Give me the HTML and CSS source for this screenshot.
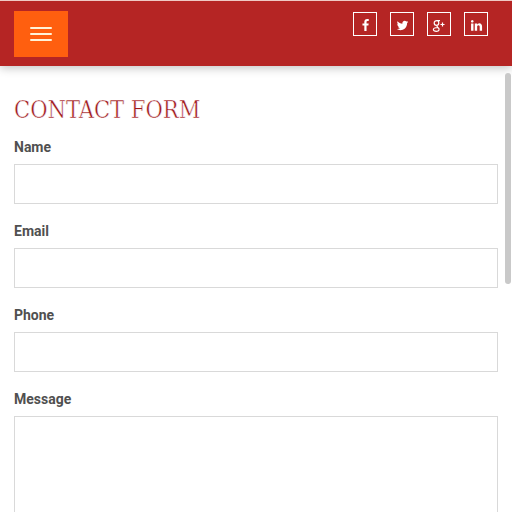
FILE: index.html
```html
<!DOCTYPE html>
<html lang="en">
<head>
<meta charset="utf-8">
<title>Contact Form</title>
<link rel="stylesheet" href="styles.css">
</head>
<body>
<header class="header">
  <button class="menu" aria-label="Menu"><span class="bar"></span><span class="bar"></span><span class="bar"></span></button>
  <nav class="social">
    <a class="social-link" aria-label="Facebook"><svg width="13" height="13" viewBox="0 0 1792 1792"><path d="M1343 12v264h-157q-86 0-116 36t-30 108v189h293l-39 296h-254v759h-306v-759h-255v-296h255v-218q0-186 104-288.5t277-102.5q147 0 228 12z"/></svg></a>
    <a class="social-link" aria-label="Twitter"><svg width="13" height="13" viewBox="0 0 1792 1792"><path d="M1684 408q-67 98-162 167 1 14 1 42 0 130-38 259.5t-115.5 248.5-184.5 210.5-258 146-323 54.5q-271 0-496-145 35 4 78 4 225 0 401-138-105-2-188-64.5t-114-159.5q33 5 61 5 43 0 85-11-112-23-185.5-111.5t-73.5-205.5v-4q68 38 146 41-66-44-105-115t-39-154q0-88 44-163 121 149 294.5 238.5t371.5 99.5q-8-38-8-74 0-134 94.5-228.5t228.5-94.5q140 0 236 102 109-21 205-78-37 115-142 178 93-10 186-50z"/></svg></a>
    <a class="social-link" aria-label="Google Plus"><svg class="outline" width="14" height="14" viewBox="0 0 14 14"><path d="M8 1.6H5C3.2 1.6 2.2 2.7 2.2 4S3.2 6.3 4.5 6.3 6.8 5.4 6.8 4 6 1.8 5.2 1.6M5 6.4C4.6 7.4 5.2 7.8 6 8.5 8 10 7.2 12.3 4.5 12.3 2.2 12.3 1.4 11.5 1.4 10.4S2.7 8.6 5.7 8.5M8.5 5.5h4M10.5 3.5v4"/></svg></a>
    <a class="social-link" aria-label="LinkedIn"><svg width="13" height="13" viewBox="0 0 1792 1792"><path d="M477 625v991h-330v-991h330zm21-306q1 73-50.5 122t-135.5 49h-2q-82 0-132-49t-50-122q0-74 51.5-122.5t134.5-48.5 133 48.5 51 122.5zm1166 729v568h-329v-530q0-105-40.5-164.5t-126.5-59.5q-63 0-105.5 34.5t-63.5 85.5q-11 30-11 81v553h-329q2-399 2-647t-1-296l-1-48h329v144h-2q20-32 41-56t56.5-52 87-43.5 114.5-15.5q171 0 275 113.5t104 332.5z"/></svg></a>
  </nav>
</header>
<main class="content">
  <h1 class="title">CONTACT FORM</h1>
  <form class="form">
    <label class="label" for="name">Name</label><input class="field" id="name">
    <label class="label" for="email">Email</label><input class="field" id="email">
    <label class="label" for="phone">Phone</label><input class="field" id="phone">
    <label class="label" for="message">Message</label><textarea class="field message" id="message"></textarea>
  </form>
</main>
<div class="scrollbar"></div>
</body>
</html>
```
FILE: styles.css
```css
* { box-sizing: border-box; }
body {
  margin: 0;
  height: 512px;
  overflow: hidden;
  background: #fff;
  color: #505050;
  font-family: Roboto, sans-serif;
}
.header {
  display: flex;
  justify-content: space-between;
  align-items: flex-start;
  height: 66px;
  padding: 10px 24px 0 14px;
  border-top: 1px solid #efc9c4;
  background: #b52524;
  box-shadow: 0 2px 9px rgba(0, 0, 0, .24);
}
.menu {
  display: flex;
  flex-direction: column;
  align-items: center;
  justify-content: center;
  gap: 4px;
  width: 54px;
  height: 46px;
  padding: 0;
  border: 0;
  background: #ff5f0f;
}
.bar { width: 22px; height: 2px; border-radius: 1px; background: #fff3d8; }
.social { display: flex; gap: 13px; padding-top: 1px; }
.social-link {
  display: flex;
  align-items: center;
  justify-content: center;
  width: 24px;
  height: 24px;
  padding-top: 3px;
  border: 1px solid #fff;
}
.social-link svg { display: block; fill: #fff; }
.social-link .outline { fill: none; stroke: #fff; stroke-width: 1.2; }
.content { height: 446px; padding: 28px 14px 0; overflow: hidden; }
.title {
  margin: 0;
  height: 32px;
  color: #a0181c;
  font: 300 23.5px/32px "Roboto Slab", "DejaVu Serif Condensed", "DejaVu Serif", serif;
  font-stretch: condensed;
  letter-spacing: -.03px;
  -webkit-text-stroke: .45px #fff;
  white-space: nowrap;
}
.form { display: flex; flex-direction: column; padding-top: 11px; }
.label { height: 20px; margin-bottom: 7px; font-size: 14px; font-weight: 700; line-height: 20px; }
.field {
  width: 100%;
  height: 40px;
  margin: 0 0 17px;
  border: 1px solid #d9d9d9;
  border-radius: 0;
  background: #fff;
  outline: 0;
  resize: none;
}
.message { height: 96px; margin: 0; border-bottom: 0; }
.scrollbar {
  position: absolute;
  top: 73px;
  right: 1px;
  width: 6px;
  height: 211px;
  border-radius: 3px;
  background: #c9c9c9;
}
```
